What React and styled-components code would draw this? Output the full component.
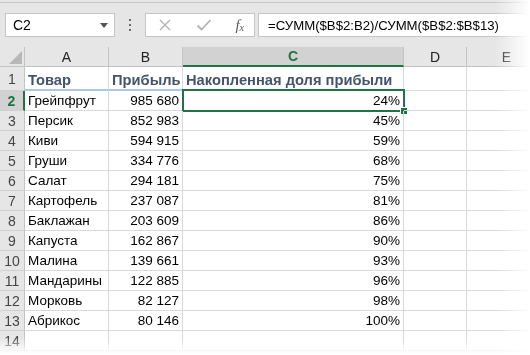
import React from "react";
import styled, { createGlobalStyle, css } from "styled-components";

const GREEN = "#217346";
const GRID = "#d9d9d9";

const rows = [
  ["Грейпфрут", "985 680", "24%"],
  ["Персик", "852 983", "45%"],
  ["Киви", "594 915", "59%"],
  ["Груши", "334 776", "68%"],
  ["Салат", "294 181", "75%"],
  ["Картофель", "237 087", "81%"],
  ["Баклажан", "203 609", "86%"],
  ["Капуста", "162 867", "90%"],
  ["Малина", "139 661", "93%"],
  ["Мандарины", "122 885", "96%"],
  ["Морковь", "82 127", "98%"],
  ["Абрикос", "80 146", "100%"],
];

const cols = ["A", "B", "C", "D", "E"];

function App() {
  return (
    <>
      <GlobalStyle />
      <Frame>
        <TopEdge />
        <Toolbar>
          <NameBox>
            C2
            <Caret viewBox="0 0 8 5">
              <path d="M0 0h8L4 5z" fill="#555" />
            </Caret>
          </NameBox>
          <Grip>
            <i />
            <i />
            <i />
          </Grip>
          <FxButtons>
            <svg width="14" height="14" viewBox="0 0 14 14">
              <path d="M2 2l10 10M12 2L2 12" stroke="#b3b3b3" strokeWidth="1.4" fill="none" />
            </svg>
            <svg width="16" height="14" viewBox="0 0 16 14">
              <path d="M1.5 7.5l4 4L14.5 2" stroke="#b3b3b3" strokeWidth="1.8" fill="none" />
            </svg>
            <FxLabel>
              f<sub>x</sub>
            </FxLabel>
          </FxButtons>
          <FormulaInput>=СУММ($B$2:B2)/СУММ($B$2:$B$13)</FormulaInput>
        </Toolbar>
        <Sheet>
          <Corner>
            <svg width="13" height="13" viewBox="0 0 13 13">
              <path d="M13 0V13H0z" fill="#b8b8b8" />
            </svg>
          </Corner>
          {cols.map((c) => (
            <ColHead key={c} $active={c === "C"}>
              {c}
            </ColHead>
          ))}

          <RowHead>1</RowHead>
          <Cell $title $line>Товар</Cell>
          <Cell $title $line>Прибыль</Cell>
          <Cell $title $line>Накопленная доля прибыли</Cell>
          <Cell />
          <Cell />

          {rows.map(([name, profit, share], i) => (
            <React.Fragment key={name}>
              <RowHead $active={i === 0}>{i + 2}</RowHead>
              <Cell>{name}</Cell>
              <Cell $right>{profit}</Cell>
              <Cell $right>
                {share}
                {i === 0 && (
                  <Selection>
                    <FillHandle />
                  </Selection>
                )}
              </Cell>
              <Cell />
              <Cell />
            </React.Fragment>
          ))}

          <RowHead>14</RowHead>
          <Cell />
          <Cell />
          <Cell />
          <Cell />
          <Cell />
        </Sheet>
      </Frame>
    </>
  );
}

const GlobalStyle = createGlobalStyle`
  body {
    margin: 0;
    background: #fff;
    font-family: "Liberation Sans", Arial, sans-serif;
  }
`;

const Frame = styled.div`
  width: 530px;
  height: 355px;
  overflow: hidden;
  background: #e6e6e6;
  mask-image: linear-gradient(to right, #000 495px, transparent 530px),
    linear-gradient(to bottom, #000 338px, transparent 354px);
  mask-composite: intersect;
`;

const TopEdge = styled.div`
  height: 2px;
  border-bottom: 1px solid #c6c6c6;
`;

const Toolbar = styled.div`
  display: flex;
  align-items: center;
  height: 24px;
  padding: 10px 0 10px 5px;
`;

const Box = styled.div`
  height: 24px;
  box-sizing: border-box;
  background: #fff;
  border: 1px solid #c6c6c6;
  display: flex;
  align-items: center;
`;

const NameBox = styled(Box)`
  width: 110px;
  padding: 0 6px 0 7px;
  justify-content: space-between;
  font-size: 14px;
  color: #000;
`;

const Caret = styled.svg`
  width: 8px;
  height: 5px;
`;

const Grip = styled.div`
  width: 30px;
  display: flex;
  flex-direction: column;
  align-items: center;
  gap: 3px;
  > i {
    width: 2px;
    height: 2px;
    background: #6d6d6d;
  }
`;

const FxButtons = styled(Box)`
  width: 110px;
  padding: 0 10px 0 12px;
  justify-content: space-between;
`;

const FxLabel = styled.span`
  font-family: "Liberation Serif", serif;
  font-style: italic;
  font-size: 15px;
  color: #5a5a5a;
  line-height: 1;
  > sub {
    font-size: 10px;
    vertical-align: -1px;
  }
`;

const FormulaInput = styled(Box)`
  flex: 1;
  margin-left: 3px;
  border-right: none;
  padding-left: 9px;
  font-size: 13.2px;
  color: #000;
  white-space: nowrap;
`;

const Sheet = styled.div`
  display: grid;
  grid-template-columns: 25px 84px 74px 221px 63px 80px;
  grid-template-rows: 20px 24px repeat(13, 20px);
  background: #fff;
  font-size: 13.5px;
`;

const Corner = styled.div`
  background: #e6e6e6;
  border-right: 1px solid #c3c3c3;
  border-bottom: 1px solid #c3c3c3;
  display: flex;
  align-items: flex-end;
  justify-content: flex-end;
  padding: 0 2px 2px 0;
`;

const ColHead = styled.div`
  background: ${(p) => (p.$active ? "#d2d2d2" : "#e6e6e6")};
  color: ${(p) => (p.$active ? GREEN : "#222")};
  font-weight: ${(p) => (p.$active ? 700 : 400)};
  border-right: 1px solid #c3c3c3;
  border-bottom: ${(p) => (p.$active ? `2px solid ${GREEN}` : "1px solid #c3c3c3")};
  display: flex;
  align-items: center;
  justify-content: center;
  font-size: 14px;
`;

const RowHead = styled.div`
  background: ${(p) => (p.$active ? "#d2d2d2" : "#e6e6e6")};
  color: ${(p) => (p.$active ? GREEN : "#444")};
  font-weight: ${(p) => (p.$active ? 700 : 400)};
  border-right: ${(p) => (p.$active ? `2px solid ${GREEN}` : "1px solid #c3c3c3")};
  border-bottom: 1px solid #cfcfcf;
  display: flex;
  align-items: center;
  justify-content: center;
  font-size: 14px;
`;

const Cell = styled.div`
  position: relative;
  border-right: 1px solid ${GRID};
  border-bottom: 1px solid ${GRID};
  display: flex;
  align-items: flex-end;
  padding: 0 3px 2px 3px;
  justify-content: ${(p) => (p.$right ? "flex-end" : "flex-start")};
  white-space: nowrap;
  color: #000;
  ${(p) =>
    p.$title &&
    css`
      font-weight: 700;
      color: #44546a;
      font-size: 14.7px;
      padding-bottom: 1px;
    `}
  ${(p) =>
    p.$line &&
    css`
      border-bottom: 2px solid #a9c8e8;
    `}
`;

const Selection = styled.div`
  position: absolute;
  left: -1px;
  top: -2px;
  right: -2px;
  bottom: -2px;
  border: 2px solid ${GREEN};
  pointer-events: none;
`;

const FillHandle = styled.div`
  position: absolute;
  right: -5px;
  bottom: -5px;
  width: 6px;
  height: 6px;
  background: ${GREEN};
  border: 1px solid #fff;
`;

export default App;
